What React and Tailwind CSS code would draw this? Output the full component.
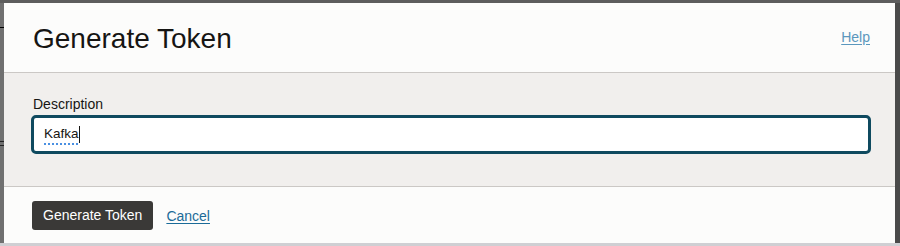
import React from 'react';

function DescriptionField({ value }) {
  return (
    <div className="h-[39px] flex items-center rounded-[5px] border-[3px] border-[#0f4a5f] bg-white pl-[10px]">
      <span className="text-[13.5px] text-[#161513] underline decoration-dotted decoration-[#4a90e2] decoration-[1.5px] underline-offset-[5px]">{value}</span>
      <span className="w-px h-[17px] bg-[#161513]" />
    </div>
  )
}

function GenerateTokenDialog() {
  return (
    <div className="flex-1 flex flex-col bg-[#fcfcfb]">
      <div className="h-[69px] flex items-center justify-between pl-[29px] pr-[25px]">
        <h1 className="text-[28px] leading-none text-[#161513] pt-[3px]">Generate Token</h1>
        <a href="#" className="text-[14px] text-[#5b97bd] underline underline-offset-2">Help</a>
      </div>
      <div className="h-[115px] border-y border-[#cbc8c5] bg-[#f1efed] pl-[27px] pr-[24px] pt-[24px]">
        <label className="block text-[14px] leading-none text-[#161513] pl-[2px] mb-[4px]">
          Description
        </label>
        <DescriptionField value="Kafka" />
      </div>
      <div className="flex-1 flex items-start gap-[13px] pl-[28px] pt-[14px]">
        <button className="h-[29px] px-[11px] rounded-[3px] bg-[#3a3937] text-white text-[14px]">Generate Token</button>
        <a href="#" className="mt-[5px] text-[14px] text-[#1b6b98] underline underline-offset-2">Cancel</a>
      </div>
    </div>
  )
}

function App() {
  return (
    <div className="w-[900px] h-[246px] overflow-hidden flex flex-col bg-[#5d5d5d] font-['Liberation_Sans',Arial,sans-serif]">
      <div className="h-[3px]" />
      <div className="flex flex-1">
        <div className="w-[4px] flex flex-col bg-[#707070]">
          <div className="h-[24px]" />
          <div className="h-[1px] bg-black" />
          <div className="h-[113px]" />
          <div className="h-[1px] bg-[#222]" />
          <div className="h-[3px]" />
          <div className="h-[1px] bg-[#222]" />
        </div>
        <GenerateTokenDialog />
        <div className="w-[5px] bg-[#4a4a4a]" />
      </div>
      <div className="h-[3px] bg-[#cfcfd3]" />
    </div>
  )
}

export default App
